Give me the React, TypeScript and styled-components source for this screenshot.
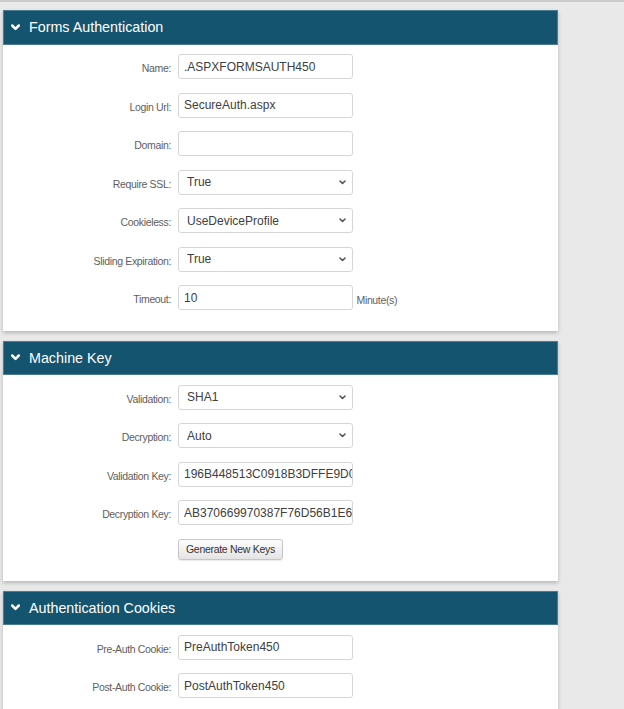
import React from "react";
import styled, { createGlobalStyle } from "styled-components";

const GlobalStyle = createGlobalStyle`
  html, body {
    margin: 0;
    padding: 0;
    background: #e9e9e9;
    font-family: "Liberation Sans", Arial, sans-serif;
  }
  * { box-sizing: border-box; }
`;

const TopEdge = styled.div`
  height: 2px;
  background: #cbcbcb;
`;

const Page = styled.div`
  width: 555px;
  margin-left: 3px;
  padding-top: 8px;
  display: flex;
  flex-direction: column;
  gap: 10px;
`;

const Panel = styled.section`
  background: #ffffff;
  box-shadow: 0 2px 4px rgba(0, 0, 0, 0.22);
`;

const Header = styled.div`
  height: 34.5px;
  background: #14546e;
  border: 1px solid #4c7e92;
  display: flex;
  align-items: center;
  padding-left: 7px;
  gap: 9px;
  color: #ffffff;
  font-size: 14.3px;
`;

const Body = styled.div<{ $top: number }>`
  padding: ${(p) => p.$top}px 0 20.5px;
  display: flex;
  flex-direction: column;
  gap: 13.5px;
`;

const Row = styled.div`
  display: grid;
  grid-template-columns: 168px 175px auto;
  column-gap: 7px;
  align-items: center;
  height: 25px;
`;

const Label = styled.label`
  grid-column: 1;
  text-align: right;
  font-size: 10.5px;
  letter-spacing: -0.35px;
  color: #5e5e5e;
  padding-top: 3px;
  white-space: nowrap;
`;

const TextInput = styled.input<{ $clip?: boolean }>`
  grid-column: 2;
  width: 175px;
  height: 25px;
  border: 1px solid #d6d6d6;
  border-radius: 3px;
  padding: 0 ${(p) => (p.$clip ? 0 : 5)}px 0 5px;
  font-family: "Liberation Sans", Arial, sans-serif;
  font-size: 12px;
  color: #404040;
  background: #fff;
  outline: none;
`;

const SelectWrap = styled.div`
  grid-column: 2;
  position: relative;
  width: 175px;
  height: 25px;
`;

const Select = styled.select`
  appearance: none;
  -webkit-appearance: none;
  width: 100%;
  height: 100%;
  border: 1px solid #d6d6d6;
  border-radius: 3px;
  padding: 0 20px 0 8px;
  font-family: "Liberation Sans", Arial, sans-serif;
  font-size: 12px;
  color: #404040;
  background: #fff;
  outline: none;
`;

const Caret = styled.svg`
  position: absolute;
  right: 7px;
  top: 10px;
  pointer-events: none;
`;

const Unit = styled.span`
  grid-column: 3;
  font-size: 10.5px;
  letter-spacing: -0.35px;
  color: #5e5e5e;
  padding-top: 4px;
  margin-left: -3.5px;
`;

const Button = styled.button`
  grid-column: 2;
  justify-self: start;
  height: 21.5px;
  padding: 0 7px;
  border: 1px solid #c6c6c6;
  border-radius: 3px;
  background: linear-gradient(#fdfdfd, #e4e4e4);
  box-shadow: 0 1px 1px rgba(0, 0, 0, 0.08);
  font-family: "Liberation Sans", Arial, sans-serif;
  font-size: 10.5px;
  letter-spacing: -0.3px;
  color: #333;
`;

const ButtonRow = styled(Row)`
  height: 21.5px;
`;

const HeaderChevron = () => (
  <svg width="9" height="7" viewBox="0 0 9 7">
    <polyline points="1.2,1.5 4.5,4.8 7.8,1.5" fill="none" stroke="#ffffff" strokeWidth="2.5" strokeLinecap="round" strokeLinejoin="round" />
  </svg>
);

const SelectField = ({ value, options }: { value: string; options: string[] }) => (
  <SelectWrap>
    <Select defaultValue={value}>
      {options.map((o) => (
        <option key={o}>{o}</option>
      ))}
    </Select>
    <Caret width="7" height="5" viewBox="0 0 7 5">
      <polyline points="1,1 3.5,3.5 6,1" fill="none" stroke="#555" strokeWidth="1.6" strokeLinecap="round" strokeLinejoin="round" />
    </Caret>
  </SelectWrap>
);

const PanelHeader = ({ title }: { title: string }) => (
  <Header>
    <HeaderChevron />
    <span>{title}</span>
  </Header>
);

export default function App() {
  return (
    <>
      <GlobalStyle />
      <TopEdge />
      <Page>
        <Panel>
          <PanelHeader title="Forms Authentication" />
          <Body $top={9.5}>
            <Row>
              <Label>Name:</Label>
              <TextInput defaultValue=".ASPXFORMSAUTH450" />
            </Row>
            <Row>
              <Label>Login Url:</Label>
              <TextInput defaultValue="SecureAuth.aspx" />
            </Row>
            <Row>
              <Label>Domain:</Label>
              <TextInput defaultValue="" />
            </Row>
            <Row>
              <Label>Require SSL:</Label>
              <SelectField value="True" options={["True", "False"]} />
            </Row>
            <Row>
              <Label>Cookieless:</Label>
              <SelectField value="UseDeviceProfile" options={["UseCookies", "UseUri", "AutoDetect", "UseDeviceProfile"]} />
            </Row>
            <Row>
              <Label>Sliding Expiration:</Label>
              <SelectField value="True" options={["True", "False"]} />
            </Row>
            <Row>
              <Label>Timeout:</Label>
              <TextInput defaultValue="10" />
              <Unit>Minute(s)</Unit>
            </Row>
          </Body>
        </Panel>

        <Panel>
          <PanelHeader title="Machine Key" />
          <Body $top={9.5}>
            <Row>
              <Label>Validation:</Label>
              <SelectField value="SHA1" options={["SHA1", "MD5", "3DES", "AES", "HMACSHA256"]} />
            </Row>
            <Row>
              <Label>Decryption:</Label>
              <SelectField value="Auto" options={["Auto", "DES", "3DES", "AES"]} />
            </Row>
            <Row>
              <Label>Validation Key:</Label>
              <TextInput $clip defaultValue="196B448513C0918B3DFFE9D07A1C3E" />
            </Row>
            <Row>
              <Label>Decryption Key:</Label>
              <TextInput $clip defaultValue="AB370669970387F76D56B1E628C4A0" />
            </Row>
            <ButtonRow>
              <Button type="button">Generate New Keys</Button>
            </ButtonRow>
          </Body>
        </Panel>

        <Panel>
          <PanelHeader title="Authentication Cookies" />
          <Body $top={9.5}>
            <Row>
              <Label>Pre-Auth Cookie:</Label>
              <TextInput defaultValue="PreAuthToken450" />
            </Row>
            <Row>
              <Label>Post-Auth Cookie:</Label>
              <TextInput defaultValue="PostAuthToken450" />
            </Row>
          </Body>
        </Panel>
      </Page>
    </>
  );
}
